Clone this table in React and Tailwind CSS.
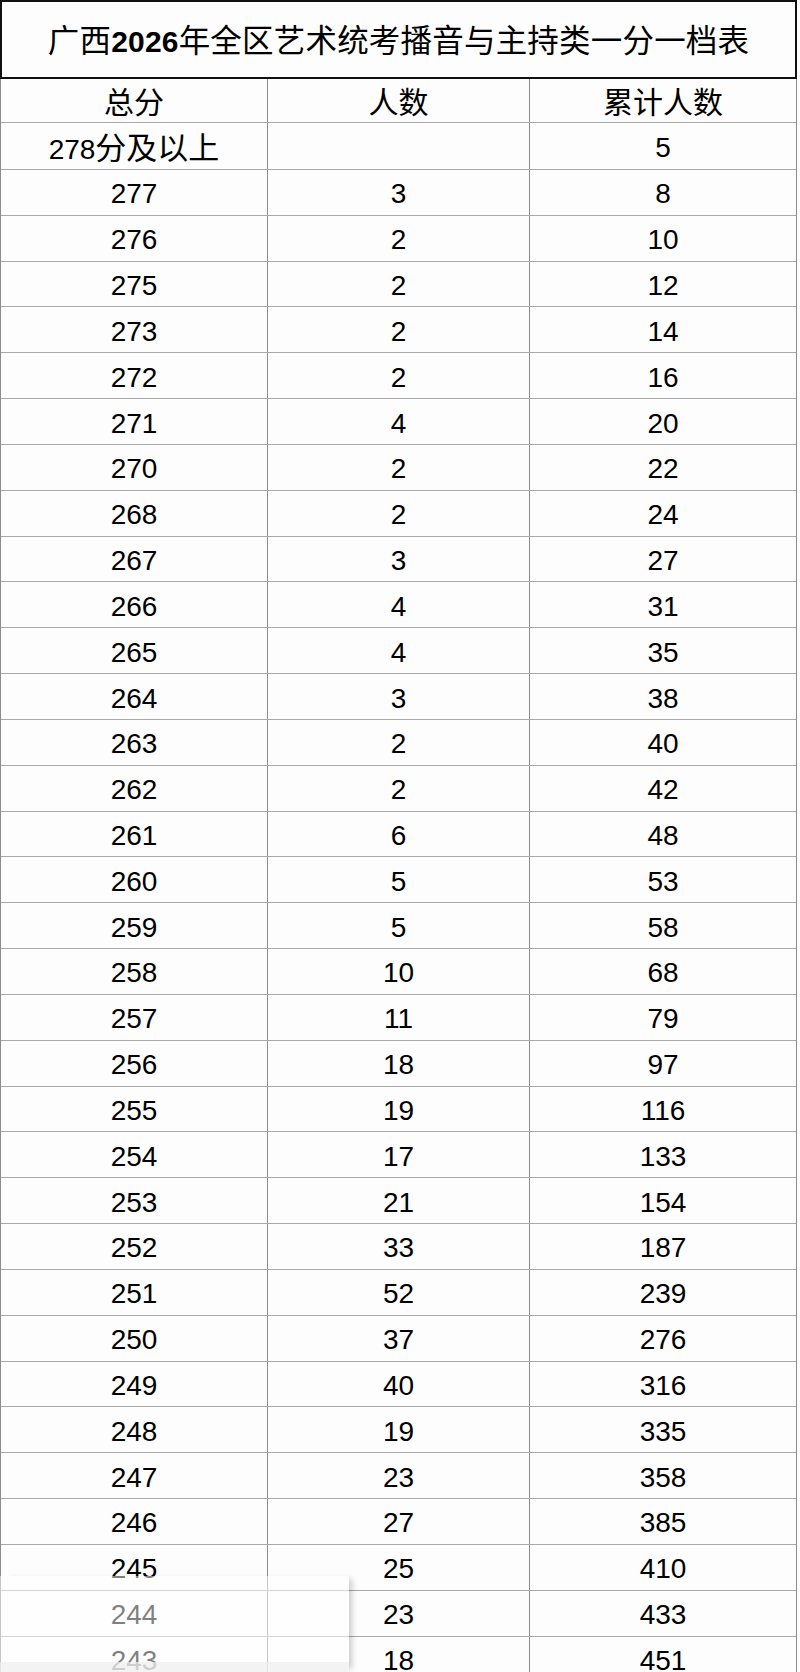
import React from 'react';

const rows = [
  ['277', '3', '8'],
  ['276', '2', '10'],
  ['275', '2', '12'],
  ['273', '2', '14'],
  ['272', '2', '16'],
  ['271', '4', '20'],
  ['270', '2', '22'],
  ['268', '2', '24'],
  ['267', '3', '27'],
  ['266', '4', '31'],
  ['265', '4', '35'],
  ['264', '3', '38'],
  ['263', '2', '40'],
  ['262', '2', '42'],
  ['261', '6', '48'],
  ['260', '5', '53'],
  ['259', '5', '58'],
  ['258', '10', '68'],
  ['257', '11', '79'],
  ['256', '18', '97'],
  ['255', '19', '116'],
  ['254', '17', '133'],
  ['253', '21', '154'],
  ['252', '33', '187'],
  ['251', '52', '239'],
  ['250', '37', '276'],
  ['249', '40', '316'],
  ['248', '19', '335'],
  ['247', '23', '358'],
  ['246', '27', '385'],
  ['245', '25', '410'],
  ['244', '23', '433'],
  ['243', '18', '451'],
];

const cell = 'flex items-center justify-center pt-[4px]';

const Row = ({ a, b, c, h = 'h-[45.84px]' }) => (
  <div className={`flex ${h} border-b border-[#a9a9a9]`}>
    <div className={`${cell} w-[267px] border-r border-[#8c8c8c]`}>{a}</div>
    <div className={`${cell} w-[262px] border-r border-[#8c8c8c]`}>{b}</div>
    <div className={`${cell} flex-1`}>{c}</div>
  </div>
);

const App = () => {
  return (
    <div
      className="relative h-[1672px] w-[800px] overflow-hidden bg-[#fdfdfd] text-black"
      style={{ fontFamily: '"Liberation Sans", "Noto Sans CJK SC", sans-serif' }}
    >
      {/* Title */}
      <div className="flex h-[79px] w-[797px] items-center justify-center border-2 border-[#111] pt-[4px]">
        <h1 className="text-[31.5px] font-normal leading-none tracking-[0.2px]">
          广西<span className="text-[30px] font-bold">2026</span>年全区艺术统考播音与主持类一分一档表
        </h1>
      </div>

      {/* Table */}
      <div className="w-[797px] border-x border-[#8c8c8c] text-[28px] leading-none">
        <Row
          h="h-[44px]"
          a={<span className="text-[30px]">总分</span>}
          b={<span className="text-[30px]">人数</span>}
          c={<span className="text-[30px]">累计人数</span>}
        />
        <Row
          h="h-[47px]"
          a={
            <span>
              278<span className="text-[31px]">分及以上</span>
            </span>
          }
          b=""
          c="5"
        />
        {rows.map(([a, b, c]) => (
          <Row key={a} a={a} b={b} c={c} />
        ))}
      </div>

      {/* translucent overlay at bottom left */}
      <div className="absolute left-0 top-[1576px] flex h-[96px] w-[349px] flex-col justify-end bg-white/50 shadow-[6px_0_6px_-3px_rgba(0,0,0,0.2)]">
        <div className="h-[10px] bg-[#eeeeee]/70"></div>
      </div>
    </div>
  );
};

export default App;
